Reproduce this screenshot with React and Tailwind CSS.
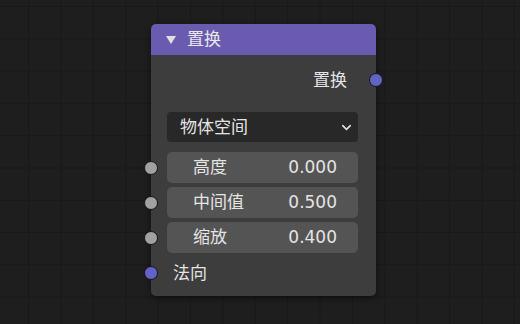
import { ChevronDown } from "lucide-react";

const font = { fontFamily: '"DejaVu Sans", "Noto Sans CJK SC", sans-serif' };

function Socket({ side = "left", color = "bg-[#a1a1a1]" }) {
  return (
    <span
      className={`absolute top-1/2 -translate-y-1/2 w-[14px] h-[14px] rounded-full border border-[#151515] ${color} ${
        side === "left" ? "left-[-7px]" : "right-[-7px]"
      }`}
    />
  );
}

function NumberField({ label, value }) {
  return (
    <div className="relative px-[16px]">
      <Socket />
      <div className="h-[31px] rounded-[5px] bg-[#545454] flex items-center justify-between pl-[26px] pr-[21px] text-[#e4e4e4]">
        <span>{label}</span>
        <span>{value}</span>
      </div>
    </div>
  );
}

export default function App() {
  return (
    <div
      className="relative w-[520px] h-[324px] overflow-hidden bg-[#1e1e1e] bg-[linear-gradient(to_right,#181818_1px,transparent_1px),linear-gradient(to_bottom,#181818_1px,transparent_1px)] bg-[size:32.4px_32.3px] bg-[position:28px_6px] text-[17px] leading-none"
      style={font}
    >
      {/* node */}
      <div className="absolute left-[151px] top-[24px] w-[225px] rounded-[5px] shadow-[0_2px_6px_rgba(0,0,0,0.5)]">
        <div className="h-[31px] rounded-t-[5px] bg-[#6a5bb0] flex items-center pl-[15px] gap-[11px] text-[#e8e8e8]">
          <svg width="10" height="8" viewBox="0 0 10 8">
            <path d="M0 0 H10 L5 8 Z" fill="#e0e0e0" />
          </svg>
          <span>置换</span>
        </div>

        <div className="rounded-b-[5px] bg-[#3d3d3d] pt-[12px] pb-[10px] flex flex-col">
          <div className="relative h-[26px] flex items-center justify-end pr-[29px] text-[#e4e4e4]">
            <span>置换</span>
            <Socket side="right" color="bg-[#6363c7]" />
          </div>

          <div className="mt-[19px] mx-[16px] mr-[18px] h-[30px] rounded-[4px] bg-[#282828] flex items-center justify-between pl-[13px] pr-[4px] text-[#e4e4e4]">
            <span>物体空间</span>
            <ChevronDown size={15} strokeWidth={2.5} color="#e4e4e4" />
          </div>

          <div className="mt-[10px] flex flex-col gap-[4px] [&>div]:pr-[18px]">
            <NumberField label="高度" value="0.000" />
            <NumberField label="中间值" value="0.500" />
            <NumberField label="缩放" value="0.400" />
          </div>

          <div className="relative mt-[7px] h-[26px] flex items-center pl-[22px] text-[#e4e4e4]">
            <Socket color="bg-[#6363c7]" />
            <span>法向</span>
          </div>
        </div>
      </div>
    </div>
  );
}
